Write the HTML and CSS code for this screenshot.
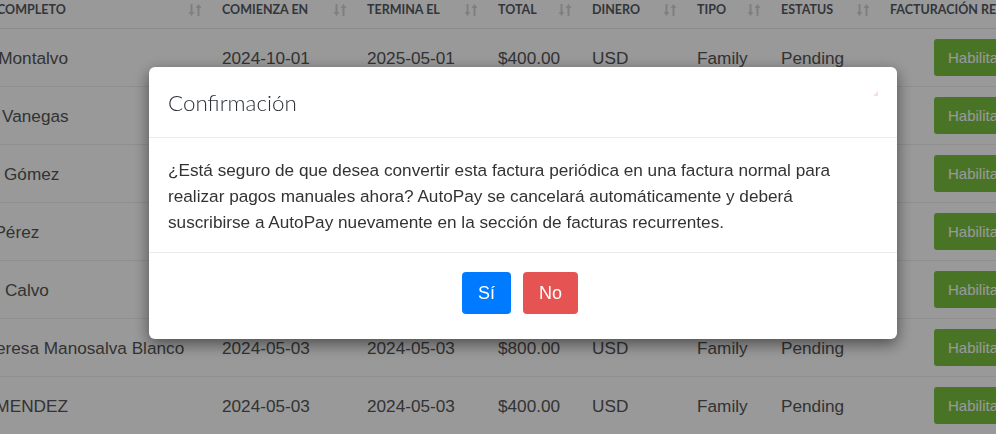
FILE: index.html
```html
<!DOCTYPE html>
<html lang="es">
<head>
    <meta charset="UTF-8">
    <meta name="viewport" content="width=device-width, initial-scale=1.0">
    <title>Facturas recurrentes</title>
    <link rel="stylesheet" href="styles.css">
</head>
<body>
    <div class="page">
        <table class="invoices">
            <colgroup>
                <col class="c-name">
                <col class="c-start">
                <col class="c-end">
                <col class="c-total">
                <col class="c-money">
                <col class="c-type">
                <col class="c-status">
                <col class="c-billing">
            </colgroup>
            <thead>
                <tr>
                    <th><div class="th-in"><span>Nombre completo</span><svg class="sort" viewBox="0 0 14 14"><rect x="2.5" y="1" width="2" height="9"/><polygon points="0.5,9 6.5,9 3.5,13"/><rect x="9.5" y="4" width="2" height="9"/><polygon points="7.5,5 13.5,5 10.5,1"/></svg></div></th>
                    <th><div class="th-in"><span>Comienza en</span><svg class="sort" viewBox="0 0 14 14"><rect x="2.5" y="1" width="2" height="9"/><polygon points="0.5,9 6.5,9 3.5,13"/><rect x="9.5" y="4" width="2" height="9"/><polygon points="7.5,5 13.5,5 10.5,1"/></svg></div></th>
                    <th><div class="th-in"><span>Termina el</span><svg class="sort" viewBox="0 0 14 14"><rect x="2.5" y="1" width="2" height="9"/><polygon points="0.5,9 6.5,9 3.5,13"/><rect x="9.5" y="4" width="2" height="9"/><polygon points="7.5,5 13.5,5 10.5,1"/></svg></div></th>
                    <th><div class="th-in"><span>Total</span><svg class="sort" viewBox="0 0 14 14"><rect x="2.5" y="1" width="2" height="9"/><polygon points="0.5,9 6.5,9 3.5,13"/><rect x="9.5" y="4" width="2" height="9"/><polygon points="7.5,5 13.5,5 10.5,1"/></svg></div></th>
                    <th><div class="th-in"><span>Dinero</span><svg class="sort" viewBox="0 0 14 14"><rect x="2.5" y="1" width="2" height="9"/><polygon points="0.5,9 6.5,9 3.5,13"/><rect x="9.5" y="4" width="2" height="9"/><polygon points="7.5,5 13.5,5 10.5,1"/></svg></div></th>
                    <th><div class="th-in"><span>Tipo</span><svg class="sort" viewBox="0 0 14 14"><rect x="2.5" y="1" width="2" height="9"/><polygon points="0.5,9 6.5,9 3.5,13"/><rect x="9.5" y="4" width="2" height="9"/><polygon points="7.5,5 13.5,5 10.5,1"/></svg></div></th>
                    <th><div class="th-in"><span>Estatus</span><svg class="sort" viewBox="0 0 14 14"><rect x="2.5" y="1" width="2" height="9"/><polygon points="0.5,9 6.5,9 3.5,13"/><rect x="9.5" y="4" width="2" height="9"/><polygon points="7.5,5 13.5,5 10.5,1"/></svg></div></th>
                    <th><div class="th-in"><span>Facturación recurrente</span></div></th>
                </tr>
            </thead>
            <tbody>
                <tr>
                    <td>Andrés Montalvo</td><td>2024-10-01</td><td>2025-05-01</td><td>$400.00</td><td>USD</td><td>Family</td><td>Pending</td>
                    <td class="td-action"><button class="btn-enable">Habilitar</button></td>
                </tr>
                <tr>
                    <td>Daniela Vanegas</td><td>2024-09-15</td><td>2025-03-15</td><td>$600.00</td><td>USD</td><td>Family</td><td>Pending</td>
                    <td class="td-action"><button class="btn-enable">Habilitar</button></td>
                </tr>
                <tr>
                    <td>Rodrigo Gómez</td><td>2024-08-20</td><td>2025-02-20</td><td>$400.00</td><td>USD</td><td>Family</td><td>Pending</td>
                    <td class="td-action"><button class="btn-enable">Habilitar</button></td>
                </tr>
                <tr>
                    <td>Miguel Pérez</td><td>2024-07-10</td><td>2025-01-10</td><td>$800.00</td><td>USD</td><td>Family</td><td>Pending</td>
                    <td class="td-action"><button class="btn-enable">Habilitar</button></td>
                </tr>
                <tr>
                    <td>Roberto Calvo</td><td>2024-06-01</td><td>2024-12-01</td><td>$400.00</td><td>USD</td><td>Family</td><td>Pending</td>
                    <td class="td-action"><button class="btn-enable">Habilitar</button></td>
                </tr>
                <tr>
                    <td>María Teresa Manosalva Blanco</td><td>2024-05-03</td><td>2024-05-03</td><td>$800.00</td><td>USD</td><td>Family</td><td>Pending</td>
                    <td class="td-action"><button class="btn-enable">Habilitar</button></td>
                </tr>
                <tr>
                    <td>DIANA MENDEZ</td><td>2024-05-03</td><td>2024-05-03</td><td>$400.00</td><td>USD</td><td>Family</td><td>Pending</td>
                    <td class="td-action"><button class="btn-enable">Habilitar</button></td>
                </tr>
            </tbody>
        </table>
    </div>

    <div class="backdrop">
        <div class="modal">
            <div class="modal-header">
                <h5 class="modal-title">Confirmación</h5>
                <svg class="close" viewBox="0 0 5 5"><polygon points="5,0 5,5 0,5"/></svg>
            </div>
            <div class="modal-body">
                <p>¿Está seguro de que desea convertir esta factura periódica en una factura normal para realizar pagos manuales ahora? AutoPay se cancelará automáticamente y deberá suscribirse a AutoPay nuevamente en la sección de facturas recurrentes.</p>
            </div>
            <div class="modal-footer">
                <button class="btn btn-primary">Sí</button>
                <button class="btn btn-danger">No</button>
            </div>
        </div>
    </div>
</body>
</html>
```

FILE: styles.css
```css
* {
    margin: 0;
    padding: 0;
    box-sizing: border-box;
}

html, body {
    width: 996px;
    height: 434px;
    overflow: hidden;
}

body {
    font-family: "Liberation Sans", Arial, sans-serif;
    background: #fff;
    color: #555;
}

.page {
    width: 996px;
    overflow: hidden;
}

.invoices {
    table-layout: fixed;
    border-collapse: collapse;
    width: 1151px;
    margin-left: -69px;
}

.c-name { width: 283px; }
.c-start { width: 145px; }
.c-end { width: 131px; }
.c-total { width: 94px; }
.c-money { width: 105px; }
.c-type { width: 84px; }
.c-status { width: 109px; }
.c-billing { width: 200px; }

.invoices th {
    font-family: Lato, "Open Sans", sans-serif;
    font-weight: 700;
    font-size: 12.5px;
    text-transform: uppercase;
    text-align: left;
    color: #545b64;
    padding: 0 0 8px 8px;
    line-height: 20px;
    border-bottom: 1px solid #e6e6e6;
    white-space: nowrap;
    overflow: hidden;
}

.th-in {
    display: flex;
    align-items: center;
    justify-content: space-between;
    padding-right: 12px;
}

.sort {
    width: 14px;
    height: 14px;
    fill: #d4d4d4;
    flex-shrink: 0;
}

.invoices td {
    font-size: 17.2px;
    line-height: 24px;
    padding: 17px 8px 16px;
    border-bottom: 1px solid #eee;
    white-space: nowrap;
    overflow: hidden;
    vertical-align: middle;
}

.invoices td.td-action {
    padding: 10px 0 10px 52px;
}

.btn-enable {
    font-family: "Liberation Sans", Arial, sans-serif;
    font-size: 15px;
    line-height: 21px;
    padding: 8px 14px;
    border: none;
    border-radius: 3px;
    background: #7cc23f;
    color: #fff;
    width: 90px;
    text-align: left;
}

/* modal */
.backdrop {
    position: fixed;
    top: 0;
    left: 0;
    right: 0;
    bottom: 0;
    background: rgba(0, 0, 0, 0.4);
}

.modal {
    width: 748px;
    margin: 67px 0 0 149px;
    background: #fff;
    border-radius: 6px;
    box-shadow: 0 5px 15px rgba(0, 0, 0, 0.5);
}

.modal-header {
    height: 71px;
    padding: 0 19px;
    display: flex;
    justify-content: space-between;
    align-items: center;
    border-bottom: 1px solid #e9ecef;
}

.modal-title {
    font-family: Lato, "Open Sans", sans-serif;
    font-weight: 300;
    font-size: 22.4px;
    color: #2b3037;
}

.close {
    width: 5px;
    height: 5px;
    fill: #f6dede;
    align-self: flex-start;
    margin-top: 24px;
}

.modal-body {
    padding: 19px 19px 17px;
    font-size: 17.2px;
    line-height: 26px;
    color: #333;
}

.modal-footer {
    display: flex;
    justify-content: center;
    gap: 12px;
    padding: 19px 6px 25px 0;
    border-top: 1px solid #e9ecef;
}

.btn {
    font-family: "Liberation Sans", Arial, sans-serif;
    font-size: 18px;
    line-height: 24px;
    padding: 9px 16px;
    border: none;
    border-radius: 4px;
    color: #fff;
    cursor: pointer;
}

.btn-primary {
    background: #007bff;
}

.btn-danger {
    background: #e55353;
}
```
